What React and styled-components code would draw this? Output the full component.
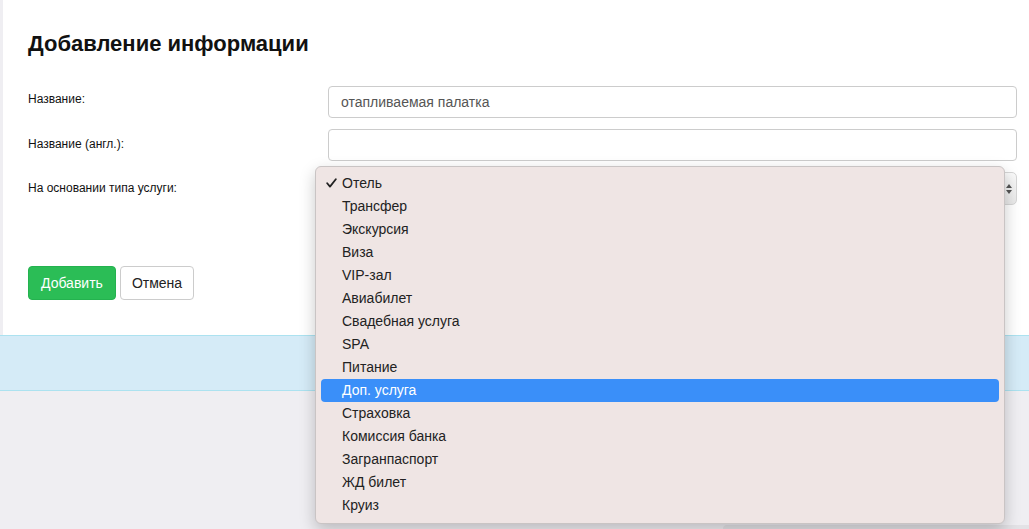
import React from "react";
import styled, { createGlobalStyle } from "styled-components";

const GlobalStyle = createGlobalStyle`
  html, body {
    margin: 0;
    padding: 0;
    background: #efeef2;
    font-family: "Liberation Sans", Arial, sans-serif;
  }
`;

const serviceTypes = [
  "Отель",
  "Трансфер",
  "Экскурсия",
  "Виза",
  "VIP-зал",
  "Авиабилет",
  "Свадебная услуга",
  "SPA",
  "Питание",
  "Доп. услуга",
  "Страховка",
  "Комиссия банка",
  "Загранпаспорт",
  "ЖД билет",
  "Круиз",
];

const Page = styled.div`
  width: 1029px;
  height: 529px;
  overflow: hidden;
  background: #efeef2;
`;

const Panel = styled.div`
  margin-left: 3px;
  height: 335px;
  box-sizing: border-box;
  background: #fff;
  padding: 31px 12px 0 25px;
`;

const Title = styled.h1`
  margin: 0 0 30px;
  font-size: 22px;
  line-height: 25px;
  font-weight: bold;
  color: #111;
`;

const Form = styled.div`
  display: grid;
  grid-template-columns: 300px 1fr;
  row-gap: 11px;
`;

const Label = styled.label`
  font-size: 12px;
  line-height: 16px;
  color: #111;
  padding-top: ${(props) => props.top || 6}px;
`;

const Input = styled.div`
  height: 32px;
  box-sizing: border-box;
  border: 1px solid #ccc;
  border-radius: 4px;
  padding: 0 12px;
  display: flex;
  align-items: center;
  font-size: 14px;
  color: #555;
`;

const SelectWrap = styled.div`
  position: relative;
  height: 33px;
`;

const SelectBox = styled.div`
  height: 33px;
  box-sizing: border-box;
  border: 1px solid #d6d6d6;
  border-radius: 5px;
  background: linear-gradient(#fafafa, #e9e9e9);
  display: flex;
  justify-content: flex-end;
  align-items: center;
  padding-right: 3px;
`;

const Popup = styled.ul`
  position: absolute;
  left: -13px;
  top: -6px;
  width: 690px;
  margin: 0;
  padding: 5px 5px 6px;
  box-sizing: border-box;
  list-style: none;
  background: #efe5e4;
  border: 1px solid #c9c4c4;
  border-radius: 6px;
  box-shadow: 0 6px 16px rgba(0, 0, 0, 0.22);
  z-index: 10;
`;

const Option = styled.li`
  position: relative;
  height: 23px;
  line-height: 22px;
  padding-left: 21px;
  font-size: 14px;
  border-radius: 4px;
  color: ${(props) => (props.active ? "#fff" : "#222")};
  background: ${(props) => (props.active ? "#3a8ff9" : "transparent")};
`;

const Check = styled.svg`
  position: absolute;
  left: 5px;
  top: 6px;
`;

const Buttons = styled.div`
  display: flex;
  gap: 4px;
  margin-top: 61px;
`;

const Button = styled.button`
  height: 34px;
  box-sizing: border-box;
  padding: 0 ${(props) => (props.primary ? 12 : 11)}px;
  font-family: "Liberation Sans", Arial, sans-serif;
  font-size: 14px;
  border-radius: 4px;
  border: 1px solid ${(props) => (props.primary ? "#24b24f" : "#ccc")};
  background: ${(props) => (props.primary ? "#2bbd56" : "#fff")};
  color: ${(props) => (props.primary ? "#fff" : "#222")};
`;

const Band = styled.div`
  height: 54px;
  background: #d5ebf7;
  border-top: 1px solid #ace2f0;
  border-bottom: 1px solid #ace2f0;
`;

const Lower = styled.div`
  display: flex;
  justify-content: flex-end;
  padding-top: 134px;
`;

const Card = styled.div`
  width: 306px;
  height: 20px;
  background: #e3e2e6;
  border-radius: 4px 0 0 0;
`;

const Stepper = () => (
  <svg width="8" height="12" viewBox="0 0 8 12">
    <path d="M4 1 L7 5 L1 5 Z" fill="#555" />
    <path d="M4 11 L7 7 L1 7 Z" fill="#555" />
  </svg>
);

const CheckMark = () => (
  <Check width="11" height="10" viewBox="0 0 11 10">
    <path
      d="M1.2 5.2 L4 8.6 L9.8 1.2"
      fill="none"
      stroke="#222"
      strokeWidth="1.8"
      strokeLinecap="round"
      strokeLinejoin="round"
    />
  </Check>
);

export default function App() {
  return (
    <Page>
      <GlobalStyle />
      <Panel>
        <Title>Добавление информации</Title>
        <Form>
          <Label top={5}>Название:</Label>
          <Input>отапливаемая палатка</Input>
          <Label top={7}>Название (англ.):</Label>
          <Input />
          <Label top={8}>На основании типа услуги:</Label>
          <SelectWrap>
            <SelectBox>
              <Stepper />
            </SelectBox>
            <Popup>
              {serviceTypes.map((name, i) => (
                <Option key={name} active={i === 9}>
                  {i === 0 && <CheckMark />}
                  {name}
                </Option>
              ))}
            </Popup>
          </SelectWrap>
        </Form>
        <Buttons>
          <Button primary>Добавить</Button>
          <Button>Отмена</Button>
        </Buttons>
      </Panel>
      <Band />
      <Lower>
        <Card />
      </Lower>
    </Page>
  );
}
